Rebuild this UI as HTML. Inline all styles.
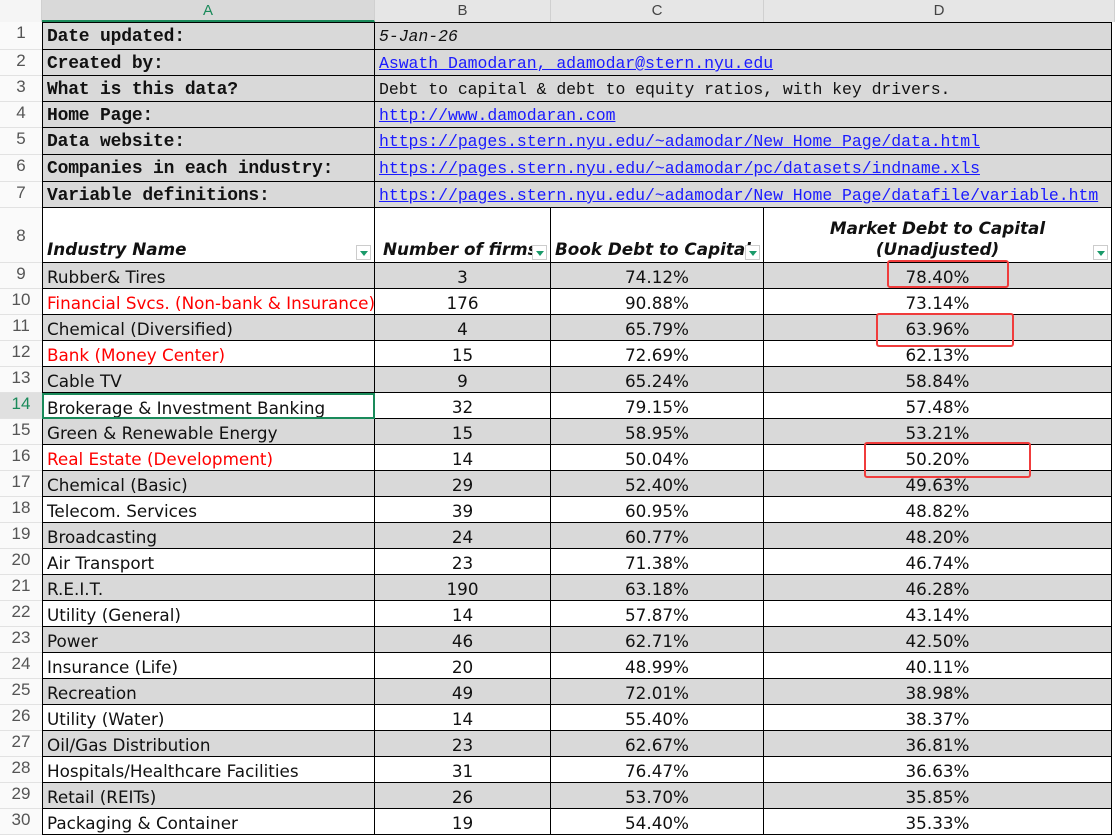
<!DOCTYPE html>
<html><head><meta charset="utf-8"><style>
body{margin:0;width:1115px;height:835px;overflow:hidden;background:#fff;position:relative;font-family:"DejaVu Sans","Liberation Sans",sans-serif}
.hdr{position:absolute;top:0;height:22px;background:#e6e6e6;color:#444;font-size:15px;text-align:center;line-height:22px;border-right:1px solid #d0d0d0;box-sizing:border-box;font-family:"Liberation Sans",sans-serif}
.row{position:absolute;left:0;width:1115px;display:flex}
.row>div{box-sizing:border-box;height:100%;overflow:hidden;white-space:nowrap;border-right:1px solid #000;border-bottom:1px solid #000;padding:3px 0 0 4px;line-height:22px;font-size:16.8px;color:#111;position:relative}
.row>div.n{width:42px;border:none;border-bottom:1px solid #e2e2e2;background:#fafafa;color:#555;text-align:center;padding:0;font-family:"Liberation Sans",sans-serif;font-size:17px;line-height:22px}
.row>div.a{width:333px;border-left:1px solid #000}
.row>div.b{width:176px}.row>div.c{width:213px}.row>div.d{width:348px}
.row>div.bcd{width:737px}
.row>div.ctr{text-align:center;padding-left:0}
.g>div:not(.n){background:#d9d9d9}
.m{font-family:"Liberation Mono",monospace!important;font-weight:bold;font-size:18px!important;letter-spacing:-0.2px}
.l{font-family:"Liberation Mono",monospace!important;font-size:16.5px!important;color:#1a1aff!important;text-decoration:underline;letter-spacing:-0.05px}
.t{font-family:"Liberation Mono",monospace!important;font-size:16.5px!important;letter-spacing:-0.05px}
.r{color:#f00!important}
.h8>div:not(.n){font-weight:bold;font-style:italic;padding-top:10px!important;line-height:21px!important;display:flex;align-items:flex-end;padding-bottom:2px!important}
.dd{position:absolute;right:3px;bottom:2px;width:15px;height:15px;border:1px solid #ccc;background:#fff;box-sizing:border-box}
.dd:after{content:"";position:absolute;left:3px;top:5px;border-left:4px solid transparent;border-right:4px solid transparent;border-top:5px solid #1a9a6a}
.box{position:absolute;border:2px solid #f03c3c;border-radius:3px}
</style></head><body>
<div class="hdr" style="left:0;width:42px;background:#f5f5f5"></div>
<div class="hdr" style="left:42px;width:333px;background:#d9d9d9;color:#1a8a5a;border-bottom:2px solid #1a8a5a">A</div>
<div class="hdr" style="left:375px;width:176px">B</div>
<div class="hdr" style="left:551px;width:213px">C</div>
<div class="hdr" style="left:764px;width:351px">D</div>

<div class="row g" style="top:22px;height:28px"><div class="n">1</div><div class="a m" style="border-top:1px solid #000">Date updated:</div><div class="bcd t" style="font-style:italic;border-top:1px solid #000">5-Jan-26</div></div>
<div class="row g" style="top:50px;height:26px"><div class="n">2</div><div class="a m">Created by:</div><div class="bcd l">Aswath Damodaran, adamodar@stern.nyu.edu</div></div>
<div class="row g" style="top:76px;height:26px"><div class="n">3</div><div class="a m">What is this data?</div><div class="bcd t">Debt to capital &amp; debt to equity ratios, with key drivers.</div></div>
<div class="row g" style="top:102px;height:26px"><div class="n">4</div><div class="a m">Home Page:</div><div class="bcd l">http://www.damodaran.com</div></div>
<div class="row g" style="top:128px;height:27px"><div class="n">5</div><div class="a m">Data website:</div><div class="bcd l">https://pages.stern.nyu.edu/~adamodar/New_Home_Page/data.html</div></div>
<div class="row g" style="top:155px;height:27px"><div class="n">6</div><div class="a m">Companies in each industry:</div><div class="bcd l">https://pages.stern.nyu.edu/~adamodar/pc/datasets/indname.xls</div></div>
<div class="row g" style="top:182px;height:26px"><div class="n">7</div><div class="a m">Variable definitions:</div><div class="bcd l">https://pages.stern.nyu.edu/~adamodar/New_Home_Page/datafile/variable.htm</div></div>
<div class="row h8" style="top:208px;height:55px"><div class="n" style="line-height:55px">8</div><div class="a">Industry Name<span class="dd"></span></div><div class="b" style="padding-left:8px">Number of firms<span class="dd"></span></div><div class="c">Book Debt to Capital<span class="dd"></span></div><div class="d" style="justify-content:center;text-align:center;padding-left:0">Market Debt to Capital<br>(Unadjusted)<span class="dd"></span></div></div>

<div class="row g" style="top:263px;height:26px"><div class="n">9</div><div class="a">Rubber&amp; Tires</div><div class="b ctr">3</div><div class="c ctr">74.12%</div><div class="d ctr">78.40%</div></div>
<div class="row" style="top:289px;height:26px"><div class="n">10</div><div class="a r">Financial Svcs. (Non-bank &amp; Insurance)</div><div class="b ctr">176</div><div class="c ctr">90.88%</div><div class="d ctr">73.14%</div></div>
<div class="row g" style="top:315px;height:26px"><div class="n">11</div><div class="a">Chemical (Diversified)</div><div class="b ctr">4</div><div class="c ctr">65.79%</div><div class="d ctr">63.96%</div></div>
<div class="row" style="top:341px;height:26px"><div class="n">12</div><div class="a r">Bank (Money Center)</div><div class="b ctr">15</div><div class="c ctr">72.69%</div><div class="d ctr">62.13%</div></div>
<div class="row g" style="top:367px;height:26px"><div class="n">13</div><div class="a">Cable TV</div><div class="b ctr">9</div><div class="c ctr">65.24%</div><div class="d ctr">58.84%</div></div>
<div class="row" style="top:393px;height:26px"><div class="n" style="background:#e0e0e0;color:#1a8a5a">14</div><div class="a" style="border:2px solid #1a8a5a;padding-top:2px;padding-left:3px">Brokerage &amp; Investment Banking</div><div class="b ctr">32</div><div class="c ctr">79.15%</div><div class="d ctr">57.48%</div></div>
<div class="row g" style="top:419px;height:26px"><div class="n">15</div><div class="a">Green &amp; Renewable Energy</div><div class="b ctr">15</div><div class="c ctr">58.95%</div><div class="d ctr">53.21%</div></div>
<div class="row" style="top:445px;height:26px"><div class="n">16</div><div class="a r">Real Estate (Development)</div><div class="b ctr">14</div><div class="c ctr">50.04%</div><div class="d ctr">50.20%</div></div>
<div class="row g" style="top:471px;height:26px"><div class="n">17</div><div class="a">Chemical (Basic)</div><div class="b ctr">29</div><div class="c ctr">52.40%</div><div class="d ctr">49.63%</div></div>
<div class="row" style="top:497px;height:26px"><div class="n">18</div><div class="a">Telecom. Services</div><div class="b ctr">39</div><div class="c ctr">60.95%</div><div class="d ctr">48.82%</div></div>
<div class="row g" style="top:523px;height:26px"><div class="n">19</div><div class="a">Broadcasting</div><div class="b ctr">24</div><div class="c ctr">60.77%</div><div class="d ctr">48.20%</div></div>
<div class="row" style="top:549px;height:26px"><div class="n">20</div><div class="a">Air Transport</div><div class="b ctr">23</div><div class="c ctr">71.38%</div><div class="d ctr">46.74%</div></div>
<div class="row g" style="top:575px;height:26px"><div class="n">21</div><div class="a">R.E.I.T.</div><div class="b ctr">190</div><div class="c ctr">63.18%</div><div class="d ctr">46.28%</div></div>
<div class="row" style="top:601px;height:26px"><div class="n">22</div><div class="a">Utility (General)</div><div class="b ctr">14</div><div class="c ctr">57.87%</div><div class="d ctr">43.14%</div></div>
<div class="row g" style="top:627px;height:26px"><div class="n">23</div><div class="a">Power</div><div class="b ctr">46</div><div class="c ctr">62.71%</div><div class="d ctr">42.50%</div></div>
<div class="row" style="top:653px;height:26px"><div class="n">24</div><div class="a">Insurance (Life)</div><div class="b ctr">20</div><div class="c ctr">48.99%</div><div class="d ctr">40.11%</div></div>
<div class="row g" style="top:679px;height:26px"><div class="n">25</div><div class="a">Recreation</div><div class="b ctr">49</div><div class="c ctr">72.01%</div><div class="d ctr">38.98%</div></div>
<div class="row" style="top:705px;height:26px"><div class="n">26</div><div class="a">Utility (Water)</div><div class="b ctr">14</div><div class="c ctr">55.40%</div><div class="d ctr">38.37%</div></div>
<div class="row g" style="top:731px;height:26px"><div class="n">27</div><div class="a">Oil/Gas Distribution</div><div class="b ctr">23</div><div class="c ctr">62.67%</div><div class="d ctr">36.81%</div></div>
<div class="row" style="top:757px;height:26px"><div class="n">28</div><div class="a">Hospitals/Healthcare Facilities</div><div class="b ctr">31</div><div class="c ctr">76.47%</div><div class="d ctr">36.63%</div></div>
<div class="row g" style="top:783px;height:26px"><div class="n">29</div><div class="a">Retail (REITs)</div><div class="b ctr">26</div><div class="c ctr">53.70%</div><div class="d ctr">35.85%</div></div>
<div class="row" style="top:809px;height:26px"><div class="n">30</div><div class="a">Packaging &amp; Container</div><div class="b ctr">19</div><div class="c ctr">54.40%</div><div class="d ctr">35.33%</div></div>

<div class="box" style="left:887px;top:260px;width:118px;height:24px"></div>
<div class="box" style="left:876px;top:313px;width:134px;height:30px"></div>
<div class="box" style="left:864px;top:442px;width:163px;height:32px"></div>
</body></html>
